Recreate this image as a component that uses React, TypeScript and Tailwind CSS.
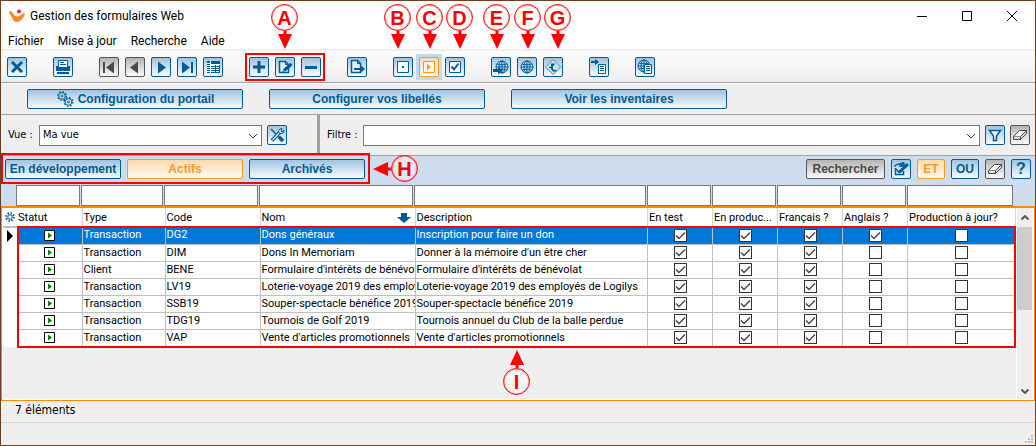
import type { ReactNode } from "react";
import clsx from "clsx";

type Tone = "blue" | "gray" | "orange";

const TONES: Record<Tone, string> = {
  blue: "border-[#005b96] from-[#9fc4e0] to-[#f8fbfd] text-[#005b96]",
  gray: "border-[#555555] from-[#b4b4b4] to-[#fbfbfb] text-[#4a4a4a]",
  orange: "border-[#ff9820] from-[#ffd9ab] to-[#fffaf4] text-[#ff9820]",
};

interface ButtonProps {
  label: string;
  tone?: Tone;
  className?: string;
  children: ReactNode;
}

function IconButton({ label, tone = "blue", className, children }: ButtonProps) {
  return (
    <button
      type="button"
      aria-label={label}
      className={clsx("size-5 shrink-0 rounded-xs border bg-linear-to-b", TONES[tone], className)}
    >
      <svg viewBox="0 0 18 18" className="size-full" fill="none" stroke="currentColor">
        {children}
      </svg>
    </button>
  );
}

function TextButton({ tone = "blue", className, children }: Omit<ButtonProps, "label">) {
  return (
    <button
      type="button"
      className={clsx(
        "flex h-5 shrink-0 items-center justify-center rounded-xs border bg-linear-to-b font-['Liberation_Sans',sans-serif] text-[12px] leading-4 font-bold whitespace-nowrap",
        TONES[tone],
        className,
      )}
    >
      {children}
    </button>
  );
}

/* ---------- icons, all drawn on an 18 x 18 grid ---------- */

const Close = () => <path d="M4 4l10 10M14 4L4 14" strokeWidth="3" />;

const Printer = () => (
  <>
    <path d="M2 8h14v5H2z" fill="currentColor" stroke="none" />
    <path d="M4.500 2.500h9v7h-9z" fill="#fff" />
    <path d="M6 4.500h4M6 6.500h6" />
    <path d="M3 14h12v2H3z" fill="currentColor" stroke="none" />
  </>
);

const First = () => (
  <g fill="currentColor" stroke="none">
    <path d="M3 4h2v11H3zM14 3.500v12L6 9.500z" />
  </g>
);
const Previous = () => <path d="M12 3.500v12L4 9.500z" fill="currentColor" stroke="none" />;
const Next = () => <path d="M6 3.500v12l8-6z" fill="currentColor" stroke="none" />;
const Last = () => (
  <g fill="currentColor" stroke="none">
    <path d="M13 4h2v11h-2zM4 3.500v12l8-6z" />
  </g>
);

const Grid = () => (
  <g stroke="none">
    <path d="M3 3h13v12H3z" fill="#fff" />
    <path d="M3 3h3v2H3zM7 3h9v3H7zM3 6h3v9H3zM7 7h9v8H7z" fill="currentColor" />
    <path
      d="M3 7h3v1H3zM3 9h3v1H3zM3 11h3v1H3zM3 13h3v1H3zM7 7h4v1H7zM7 9h4v1H7zM7 11h4v1H7zM7 13h4v1H7zM12 7h3v1h-3zM12 9h3v1h-3zM12 11h3v1h-3zM12 13h3v1h-3z"
      fill="#fff"
    />
  </g>
);

const Plus = () => <path d="M9 3v12M3 9h12" strokeWidth="3" />;
const Minus = () => <path d="M3 9.500h12" strokeWidth="3" />;

const Edit = () => (
  <>
    <path d="M3.500 3.500h6l3 3v8h-9z" fill="#e4f0f8" strokeWidth="1.500" />
    <path d="M9.500 3.500v3h3" />
    <path d="M8 12.500L15.500 6" strokeWidth="3" />
    <path d="M6.500 13.500l2-1" />
  </>
);

const Export = () => (
  <>
    <path d="M3.500 2.500h6l3 3v9h-9z" fill="#e4f0f8" strokeWidth="1.500" />
    <path d="M9.500 2.500v3h3" />
    <path d="M6 11h8" strokeWidth="2" />
    <path d="M13 7.500l4 3.500-4 3.500z" fill="currentColor" stroke="none" />
  </>
);

const Box = ({ children }: { children: ReactNode }) => (
  <>
    <path d="M3.500 3.500h11v11h-11z" fill="#fff" />
    {children}
  </>
);

const Globe = () => (
  <g strokeWidth="1">
    <circle cx="9" cy="9" r="6" fill="#cfe2f0" />
    <ellipse cx="9" cy="9" rx="3" ry="6" />
    <path d="M9 3v12M3 9h12M4 6c3 1 7 1 10 0M4 12c3-1 7-1 10 0" />
  </g>
);

const GlobeArrow = () => (
  <>
    <g transform="translate(1 0)">
      <Globe />
    </g>
    <path d="M1 11h5V8.500l4.500 4L6 16.500V14H1z" fill="currentColor" stroke="none" />
  </>
);

const Works = () => (
  <>
    <path d="M9 1.500L16.500 9 9 16.500 1.500 9z" fill="#c9deed" stroke="#4c8db8" />
    <path d="M7 5.500h3.500V7L9 8v3l1.500 1h2v1.500H9L7 11z" fill="currentColor" stroke="none" />
    <path d="M5 9.500h2" />
  </>
);

const ListArrow = () => (
  <>
    <path d="M1 4h5" strokeWidth="2" />
    <path d="M5 1l4 3-4 3z" fill="currentColor" stroke="none" />
    <path d="M8.500 6.500h7v9h-7z" fill="#fff" />
    <path d="M10 8.500h4M10 10.500h4M10 12.500h4" />
  </>
);

const GlobeList = () => (
  <>
    <g transform="translate(-1 -1)">
      <Globe />
    </g>
    <path d="M8.500 6.500h7v9h-7z" fill="#e4f0f8" />
    <path d="M10 8.500h4M10 10.500h4M10 12.500h4" />
  </>
);

const Tools = () => (
  <>
    <path d="M3 3l9 9" strokeWidth="1.500" />
    <path d="M11 11l4 4" strokeWidth="3.500" />
    <path d="M4 14.500l7.500-8" strokeWidth="3.500" />
    <path d="M4.500 14l7-7.500" stroke="#e4f0f8" strokeWidth="1.200" />
    <path d="M14 2.500l-2 .5-1.500 2 .5 2 2 .5 2.500-1 .5-2.500-2 2-1-1z" fill="#e4f0f8" />
  </>
);

const Funnel = () => <path d="M3.500 4.500h11L10.500 10v4.500h-3V10z" fill="#eaf3fa" strokeWidth="1.500" />;

const Eraser = () => (
  <>
    <path d="M2.500 10.500l6-6h7l-6 6z" fill="#f5f5f5" />
    <path d="M2.500 10.500v3h7v-3M9.500 13.500l6-6v-3" fill="#ddd" />
  </>
);

const Refine = () => (
  <>
    <path d="M8 3.500h4v3M3.500 8v6.500h8V11" fill="#e4f0f8" strokeWidth="1.500" />
    <path d="M2.500 6.500c2-3 6-3 8-1M11 2v4H7" strokeWidth="1.500" />
    <path d="M7 12.500L16 4" strokeWidth="3" />
    <path d="M4 9l3.500 4" strokeWidth="1.500" />
  </>
);

const Gears = () => (
  <svg viewBox="0 0 18 18" className="size-[18px]" fill="none" stroke="currentColor">
    <circle cx="6" cy="6" r="4.200" strokeWidth="1.500" strokeDasharray="1.600 1.700" />
    <circle cx="6" cy="6" r="3.300" fill="#d3e3ef" />
    <circle cx="6" cy="6" r="1" />
    <circle cx="12.500" cy="12" r="4.200" strokeWidth="1.500" strokeDasharray="1.600 1.700" />
    <circle cx="12.500" cy="12" r="3.300" fill="#e2edf5" />
    <circle cx="12.500" cy="12" r="1" />
  </svg>
);

const Chevron = () => (
  <svg
    viewBox="0 0 10 6"
    className="pointer-events-none absolute top-2 right-1 h-1.5 w-2.5"
    fill="none"
    stroke="#444"
  >
    <path d="M1 1l4 4 4-4" />
  </svg>
);

/* ---------- data ---------- */

interface FormRow {
  type: string;
  code: string;
  name: string;
  description: string;
  flags: boolean[];
}

const FLAGS = ["En test", "En produc...", "Français ?", "Anglais ?", "Production à jour?"];

const ROWS: FormRow[] = [
  { type: "Transaction", code: "DG2", name: "Dons généraux", description: "Inscription pour faire un don", flags: [true, true, true, true, false] },
  { type: "Transaction", code: "DIM", name: "Dons In Memoriam", description: "Donner à la mémoire d'un être cher", flags: [true, true, true, false, false] },
  { type: "Client", code: "BENE", name: "Formulaire d'intérêts de bénévolat", description: "Formulaire d'intérêts de bénévolat", flags: [true, true, true, false, false] },
  { type: "Transaction", code: "LV19", name: "Loterie-voyage 2019 des employés", description: "Loterie-voyage 2019 des employés de Logilys", flags: [true, true, true, false, false] },
  { type: "Transaction", code: "SSB19", name: "Souper-spectacle bénéfice 2019", description: "Souper-spectacle bénéfice 2019", flags: [true, true, true, false, false] },
  { type: "Transaction", code: "TDG19", name: "Tournois de Golf 2019", description: "Tournois annuel du Club de la balle perdue", flags: [true, true, true, false, false] },
  { type: "Transaction", code: "VAP", name: "Vente d'articles promotionnels", description: "Vente d'articles promotionnels", flags: [true, true, true, false, false] },
];

const COLUMNS = ["Statut", "Type", "Code", "Nom", "Description", ...FLAGS];

/* ---------- callouts ---------- */

interface CalloutProps {
  letter: string;
  point: "down" | "up" | "left";
  className: string;
}

function Callout({ letter, point, className }: CalloutProps) {
  return (
    <div
      className={clsx(
        "pointer-events-none absolute flex items-center",
        point === "down" && "flex-col",
        point === "up" && "flex-col-reverse",
        point === "left" && "flex-row-reverse",
        className,
      )}
    >
      <span className="flex size-[27px] items-center justify-center rounded-full border border-[#ff0000] bg-white/40 font-['Liberation_Sans',sans-serif] text-[20px] leading-none font-bold text-[#ff0000] ring-1 ring-[#ff0000]/30 ring-inset">
        {letter}
      </span>
      <svg
        viewBox="0 0 18 18"
        className={clsx("size-[18px]", point === "up" && "rotate-180", point === "left" && "rotate-90")}
        fill="#ff0000"
      >
        <path d="M7.500 0h3v3H16L9 18 2 3h5.500z" />
      </svg>
    </div>
  );
}

function Check({ label, checked }: { label: string; checked: boolean }) {
  return (
    <span className="relative mx-auto block size-[13px]">
      <input
        type="checkbox"
        aria-label={label}
        defaultChecked={checked}
        className="peer block size-[13px] appearance-none border border-[#333333] bg-white"
      />
      <svg
        viewBox="0 0 13 13"
        className="pointer-events-none absolute inset-0 hidden size-[13px] peer-checked:block"
        fill="none"
        stroke="#444"
        strokeWidth="1.400"
      >
        <path d="M2 6.500L5 9.500 11 3.500" />
      </svg>
    </span>
  );
}

function TitleBar() {
  return (
    <header className="flex h-[30px] items-center bg-white pl-2">
      <svg viewBox="0 0 16 14" className="h-3.5 w-4">
        <path d="M1 2c3 .500 4 5.500 7 5.500S12 5 15 4c1 0 1 1 .500 2-1.500 4-4.500 7-7.500 7-4 0-4.500-4-6-6C1 5-.500 4 0 3c.200-.600.500-1 1-1z" fill="#f68b28" />
        <circle cx="10" cy="2.500" r="2" fill="#e8243c" />
      </svg>
      <h1 className="ml-[5px] flex-1 text-[12px]">Gestion des formulaires Web</h1>
      <div className="flex pr-px">
        <button type="button" aria-label="Réduire" className="flex h-7 w-[45px] items-center justify-center">
          <svg viewBox="0 0 10 10" className="size-2.5" stroke="#000"><path d="M0 5.500h10" /></svg>
        </button>
        <button type="button" aria-label="Agrandir" className="flex h-7 w-[45px] items-center justify-center">
          <svg viewBox="0 0 10 10" className="size-2.5" fill="none" stroke="#000"><path d="M.5.500h9v9h-9z" /></svg>
        </button>
        <button type="button" aria-label="Fermer" className="flex h-7 w-[45px] items-center justify-center">
          <svg viewBox="0 0 10 10" className="size-2.5" stroke="#000"><path d="M0 0l10 10M10 0L0 10" /></svg>
        </button>
      </div>
    </header>
  );
}

function Toolbar() {
  return (
    <div className="flex h-8 items-center gap-[26px] border-b border-[#a0a0a0] bg-linear-to-b from-[#fcfcfc] to-[#eeeeee] pl-1.5">
      <IconButton label="Fermer la fenêtre"><Close /></IconButton>
      <IconButton label="Imprimer"><Printer /></IconButton>
      <div className="flex gap-1.5">
        <IconButton label="Premier" tone="gray"><First /></IconButton>
        <IconButton label="Précédent" tone="gray"><Previous /></IconButton>
        <IconButton label="Suivant"><Next /></IconButton>
        <IconButton label="Dernier"><Last /></IconButton>
        <IconButton label="Liste"><Grid /></IconButton>
      </div>
      <div className="relative flex gap-1.5">
        <IconButton label="Ajouter"><Plus /></IconButton>
        <IconButton label="Modifier"><Edit /></IconButton>
        <IconButton label="Supprimer"><Minus /></IconButton>
        <div className="pointer-events-none absolute -inset-1 border-2 border-[#ff0000]" />
      </div>
      <IconButton label="Exporter"><Export /></IconButton>
      <div className="flex gap-1.5">
        <IconButton label="En développement">
          <Box><path d="M8 8h2v2H8z" fill="currentColor" stroke="none" /></Box>
        </IconButton>
        <div className="-m-[3px] bg-[#bcdcf4] p-[3px]">
          <IconButton label="Actif" tone="orange" className="block">
            <Box><path d="M7 5.500v7L11 9z" fill="currentColor" stroke="none" /></Box>
          </IconButton>
        </div>
        <IconButton label="Archivé">
          <Box><path d="M5.500 8.500L8 11.500 12.500 5.500" strokeWidth="2" /></Box>
        </IconButton>
      </div>
      <div className="flex gap-1.5">
        <IconButton label="Mettre en ligne"><GlobeArrow /></IconButton>
        <IconButton label="Voir le site"><Globe /></IconButton>
        <IconButton label="Voir le site de test"><Works /></IconButton>
      </div>
      <IconButton label="Journal"><ListArrow /></IconButton>
      <IconButton label="Pages Web"><GlobeList /></IconButton>
    </div>
  );
}

function ViewBar() {
  return (
    <div className="flex h-10 items-stretch bg-[#efefef] font-['DejaVu_Sans_Condensed','DejaVu_Sans',sans-serif] text-[11px]">
      <div className="flex w-[316px] shrink-0 items-center pl-[7px]">
        <label htmlFor="view" className="w-[31px]">Vue :</label>
        <div className="relative">
          <select id="view" className="block h-[21px] w-[223px] appearance-none border border-[#7a7a7a] bg-white pl-[3px]">
            <option>Ma vue</option>
          </select>
          <Chevron />
        </div>
        <IconButton label="Configurer les vues" className="ml-[5px]"><Tools /></IconButton>
      </div>
      <div className="w-[3px] bg-[#a0a0a0]" />
      <div className="flex flex-1 items-center pr-[5px] pl-[7px]">
        <label htmlFor="filter" className="w-9">Filtre :</label>
        <div className="relative flex-1">
          <select id="filter" className="block h-[21px] w-full appearance-none border border-[#7a7a7a] bg-white pl-[3px]">
            <option></option>
          </select>
          <Chevron />
        </div>
        <IconButton label="Filtrer" className="mx-[5px]"><Funnel /></IconButton>
        <IconButton label="Effacer le filtre" tone="gray"><Eraser /></IconButton>
      </div>
    </div>
  );
}

function SearchPanel() {
  return (
    <div className="border-t border-[#a0a0a0] bg-[#cedded]">
      <div className="flex h-[29px] items-start justify-between pt-[3px] pr-1 pl-1">
        <div className="relative flex gap-1.5">
          <TextButton className="w-[116px]">En développement</TextButton>
          <TextButton tone="orange" className="w-[116px]">Actifs</TextButton>
          <TextButton className="w-[116px]">Archivés</TextButton>
          <div className="pointer-events-none absolute -top-1.5 -right-[5px] -bottom-[5px] -left-1 border-2 border-[#ff0000]" />
        </div>
        <div className="flex gap-1.5">
          <TextButton tone="gray" className="w-[79px]">Rechercher</TextButton>
          <IconButton label="Recherche avancée"><Refine /></IconButton>
          <TextButton tone="orange" className="w-7">ET</TextButton>
          <TextButton className="w-7">OU</TextButton>
          <IconButton label="Effacer la recherche" tone="gray"><Eraser /></IconButton>
          <TextButton className="w-5"><span className="text-[16px]">?</span></TextButton>
        </div>
      </div>
      <div className="mr-[21px] ml-[15px] grid h-[21px] grid-cols-[65px_83px_95px_155px_1fr_65px_65px_65px_65px_107px]">
        {COLUMNS.map((column) => (
          <input
            key={column}
            aria-label={`Rechercher : ${column}`}
            className="mr-px h-[21px] min-w-0 border border-[#7a7a7a] bg-white px-1 text-[11px]"
          />
        ))}
      </div>
    </div>
  );
}

function FormsTable() {
  return (
    <div className="flex h-[195px] border border-t-2 border-[#ff8c00] bg-white pr-0.5 pb-px pl-px">
      <div className="relative flex-1 bg-[#efefef]">
        <table className="w-full table-fixed border-collapse bg-white font-['Roboto',sans-serif] text-[11px] leading-4">
          <colgroup>
            <col className="w-[14px]" />
            <col className="w-[65px]" />
            <col className="w-[83px]" />
            <col className="w-[95px]" />
            <col className="w-[155px]" />
            <col />
            <col className="w-[65px]" />
            <col className="w-[65px]" />
            <col className="w-[65px]" />
            <col className="w-[65px]" />
            <col className="w-[108px]" />
          </colgroup>
          <thead>
            <tr className="h-[19px]">
              <th className="border-b-2 border-[#c0c0c0] p-0">
                <svg viewBox="0 0 10 10" className="mx-auto size-2.5" fill="none" stroke="#005b96">
                  <circle cx="5" cy="5" r="3.800" strokeWidth="2" strokeDasharray="1.500 1.480" />
                  <circle cx="5" cy="5" r="2.200" />
                </svg>
              </th>
              {COLUMNS.map((column) => (
                <th key={column} className="overflow-hidden border-r border-[#d4d4d4] p-0 pl-px text-left font-normal whitespace-nowrap">
                  {column === "Nom" ? (
                    <span className="flex items-center justify-between pr-1">
                      Nom
                      <svg viewBox="0 0 14 12" className="h-3 w-3.5" fill="#005b96">
                        <path d="M4 1h6v4h4l-7 6-7-6h4z" />
                      </svg>
                    </span>
                  ) : (
                    column
                  )}
                </th>
              ))}
            </tr>
          </thead>
          <tbody>
            {ROWS.map((row, index) => (
              <tr
                key={row.code}
                className={clsx("h-[17px]", index === 0 && "text-white")}
              >
                <td className="bg-white p-0">
                  {index === 0 && (
                    <svg viewBox="0 0 6 12" className="ml-1 h-3 w-1.5"><path d="M0 0l6 6-6 6z" /></svg>
                  )}
                </td>
                <td className={clsx("border-r border-b border-[#c0c0c0] p-0", index === 0 && "bg-[#0078d7]")}>
                  <svg viewBox="0 0 11 11" className="mx-auto size-[11px]">
                    <path d="M.5.500h10v10H.5z" fill="#fff" stroke="#000" />
                    <path d="M4 2.500v6l4-3z" fill="#008000" />
                  </svg>
                </td>
                {[row.type, row.code, row.name, row.description].map((text, cell) => (
                  <td
                    key={cell}
                    className={clsx(
                      "overflow-hidden border-r border-b border-[#c0c0c0] p-0 pl-px whitespace-nowrap",
                      index === 0 && "bg-[#0078d7]",
                    )}
                  >
                    {text}
                  </td>
                ))}
                {row.flags.map((flag, cell) => (
                  <td
                    key={cell}
                    className={clsx("border-r border-b border-[#c0c0c0] p-0", index === 0 && "bg-[#0078d7]")}
                  >
                    <Check label={`${FLAGS[cell]} ${row.code}`} checked={flag} />
                  </td>
                ))}
              </tr>
            ))}
          </tbody>
        </table>
        <div className="pointer-events-none absolute top-[18px] right-0 left-3.5 h-[122px] border-2 border-[#ff0000]" />
      </div>
      <div className="ml-px flex w-[15px] flex-col items-center bg-[#efefef]">
        <svg viewBox="0 0 8 5" className="my-[7px] h-[5px] w-2" fill="none" stroke="#555" strokeWidth="2">
          <path d="M.5 4.500L4 1l3.500 3.500" />
        </svg>
        <div className="h-[83px] w-full bg-[#cdcdcd]" />
        <svg viewBox="0 0 8 5" className="mt-auto mb-[5px] h-[5px] w-2" fill="none" stroke="#555" strokeWidth="2">
          <path d="M.5.500L4 4 7.500.500" />
        </svg>
      </div>
    </div>
  );
}

export default function App() {
  return (
    <div className="relative border border-[#6b4023] bg-[#efefef] font-['Roboto',sans-serif] text-black">
      <TitleBar />
      <nav className="flex h-5 items-center gap-[14px] border-b-2 border-[#efefef] bg-white pt-0.5 pl-[7px] text-[12px] leading-4">
        <button type="button">Fichier</button>
        <button type="button">Mise à jour</button>
        <button type="button">Recherche</button>
        <button type="button">Aide</button>
      </nav>
      <Toolbar />
      <div className="flex h-8 items-center gap-[26px] border-t border-b border-t-white border-b-[#a0a0a0] pl-[26px]">
        <TextButton className="w-[216px]">
          <Gears />
          <span className="ml-1">Configuration du portail</span>
        </TextButton>
        <TextButton className="w-[216px]">Configurer vos libellés</TextButton>
        <TextButton className="w-[216px]">Voir les inventaires</TextButton>
      </div>
      <ViewBar />
      <SearchPanel />
      <FormsTable />
      <p className="flex h-[22px] items-center border-b border-[#d7d7d7] pb-1 pl-3.5 font-['DejaVu_Sans_Condensed','DejaVu_Sans',sans-serif] text-[12px] leading-4">
        7 éléments
      </p>
      <footer className="flex h-[22px] items-end justify-end p-0.5">
        <svg viewBox="0 0 8 8" className="size-2" fill="#bdbdbd">
          <path d="M6 0h2v2H6zM3 3h2v2H3zM6 3h2v2H6zM0 6h2v2H0zM3 6h2v2H3zM6 6h2v2H6z" />
        </svg>
      </footer>

      <Callout letter="A" point="down" className="top-[3px] left-[270px]" />
      <Callout letter="B" point="down" className="top-[3px] left-[383px]" />
      <Callout letter="C" point="down" className="top-[3px] left-[415px]" />
      <Callout letter="D" point="down" className="top-[3px] left-[445px]" />
      <Callout letter="E" point="down" className="top-[3px] left-[482px]" />
      <Callout letter="F" point="down" className="top-[3px] left-[513px]" />
      <Callout letter="G" point="down" className="top-[3px] left-[543px]" />
      <Callout letter="H" point="left" className="top-[154px] left-[372px]" />
      <Callout letter="I" point="up" className="top-[349px] left-[502px]" />
    </div>
  );
}
